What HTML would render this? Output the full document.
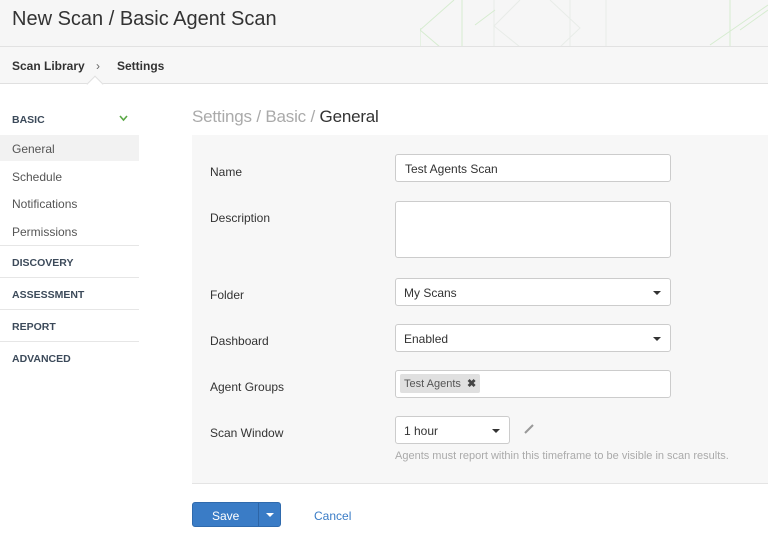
<!DOCTYPE html>
<html><head><style>
*{box-sizing:border-box;margin:0;padding:0}
body{width:768px;height:552px;overflow:hidden;background:#fff;font-family:"Liberation Sans",sans-serif;color:#333;position:relative}
.hdr{position:absolute;left:0;top:0;width:768px;height:47px;background:#f6f6f6;border-bottom:1px solid #e2e2e2;overflow:hidden}
.hdr h1{position:absolute;left:12px;top:8px;font-size:20px;font-weight:normal;color:#333}
.bc{position:absolute;left:0;top:47px;width:768px;height:37px;background:#f7f7f7;border-bottom:1px solid #e0e0e0;font-size:12px;font-weight:bold;color:#333}
.bc span{position:absolute;top:12px}
.notch{position:absolute;left:89px;top:78px;width:12px;height:12px;background:#fff;border-left:1px solid #e0e0e0;border-top:1px solid #e0e0e0;transform:rotate(45deg)}
.side{position:absolute;left:0;top:100px;width:139px}
.s{position:absolute;left:12px;font-size:12px;color:#555}
.h{position:absolute;left:12px;font-size:10.5px;font-weight:bold;color:#3c4a5a}
.ln{position:absolute;left:0;width:139px;height:1px;background:#e6e6e6}
.title{position:absolute;left:192px;top:107px;font-size:17px;color:#aaa;letter-spacing:-0.2px}
.panel{position:absolute;left:192px;top:135px;width:576px;height:349px;background:#f7f7f7;border-bottom:1px solid #e4e4e4}
.lb{position:absolute;left:210px;font-size:12px;color:#333}
.in{position:absolute;left:395px;width:276px;height:28px;background:#fff;border:1px solid #ccc;border-radius:3px;font-size:12px;color:#333;padding:7px 8px}
.car{position:absolute;right:9px;top:12px;border-left:4px solid transparent;border-right:4px solid transparent;border-top:4px solid #333}
</style></head><body>
<div class="hdr"><h1>New Scan / Basic Agent Scan</h1>
<svg style="position:absolute;left:420px;top:0" width="348" height="47" fill="none" stroke-width="1">
<g stroke="#e8ece8"><path d="M74 0 L74 47 M100 0 L74 26 L100 47 M130 0 L160 28 L140 47 M150 0 L150 47 M186 0 L186 47"/></g>
<g stroke="#d6ecd0"><path d="M0 30 L34 0 M0 28 L0 47 M0 30 L20 47 M42 0 L42 47 M75 10 L55 25"/></g>
<g stroke="#d6ecd0"><path d="M290 45 L348 5 M310 0 L310 47 M320 30 L348 10"/></g>
</svg></div>
<div class="bc"><span style="left:12px">Scan Library</span><span style="left:96px;font-weight:normal;color:#666">›</span><span style="left:117px">Settings</span></div>
<div class="notch"></div>
<div class="side">
<div class="h" style="top:14px">BASIC</div>
<svg style="position:absolute;left:119px;top:15px" width="9" height="7"><path d="M1 1 L4.5 5 L8 1" stroke="#5aa845" stroke-width="1.6" fill="none"/></svg>
<div style="position:absolute;left:0;top:35px;width:139px;height:26px;background:#f2f2f2"></div>
<div class="s" style="top:42px">General</div>
<div class="s" style="top:70px">Schedule</div>
<div class="s" style="top:97px">Notifications</div>
<div class="s" style="top:125px">Permissions</div>
<div class="ln" style="top:145px"></div>
<div class="h" style="top:157px">DISCOVERY</div>
<div class="ln" style="top:177px"></div>
<div class="h" style="top:189px">ASSESSMENT</div>
<div class="ln" style="top:209px"></div>
<div class="h" style="top:221px">REPORT</div>
<div class="ln" style="top:241px"></div>
<div class="h" style="top:253px">ADVANCED</div>
</div>
<div class="title">Settings / Basic / <span style="color:#333">General</span></div>
<div class="panel"></div>
<div class="lb" style="top:165px">Name</div>
<div class="in" style="top:154px;padding-left:9px">Test Agents Scan</div>
<div class="lb" style="top:211px">Description</div>
<div class="in" style="top:201px;height:57px"></div>
<div class="lb" style="top:288px">Folder</div>
<div class="in" style="top:278px">My Scans<div class="car"></div></div>
<div class="lb" style="top:334px">Dashboard</div>
<div class="in" style="top:324px">Enabled<div class="car"></div></div>
<div class="lb" style="top:380px">Agent Groups</div>
<div class="in" style="top:370px;padding:3px 4px"><span style="display:inline-block;background:#e0e0e0;border-radius:2px;font-size:11px;color:#555;padding:3px 4px">Test Agents&nbsp; <b style="color:#444">✖</b></span></div>
<div class="lb" style="top:426px">Scan Window</div>
<div class="in" style="top:416px;width:115px">1 hour<div class="car"></div></div>
<svg style="position:absolute;left:523px;top:423px" width="12" height="12"><path d="M2 10 L10 2" stroke="#999" stroke-width="2"/></svg>
<div style="position:absolute;left:395px;top:450px;font-size:11px;color:#aaa">Agents must report within this timeframe to be visible in scan results.</div>
<div style="position:absolute;left:192px;top:502px;width:89px;height:25px;background:#3a7cc6;border:1px solid #2f6aad;border-radius:3px;color:#fff;font-size:12px">
<span style="position:absolute;left:19px;top:6px">Save</span>
<div style="position:absolute;left:65px;top:0;width:1px;height:23px;background:#2d65a6"></div>
<div style="position:absolute;left:73px;top:10px;border-left:4px solid transparent;border-right:4px solid transparent;border-top:4px solid #fff"></div></div>
<div style="position:absolute;left:314px;top:509px;font-size:12px;color:#3a7cc6">Cancel</div>
</body></html>
